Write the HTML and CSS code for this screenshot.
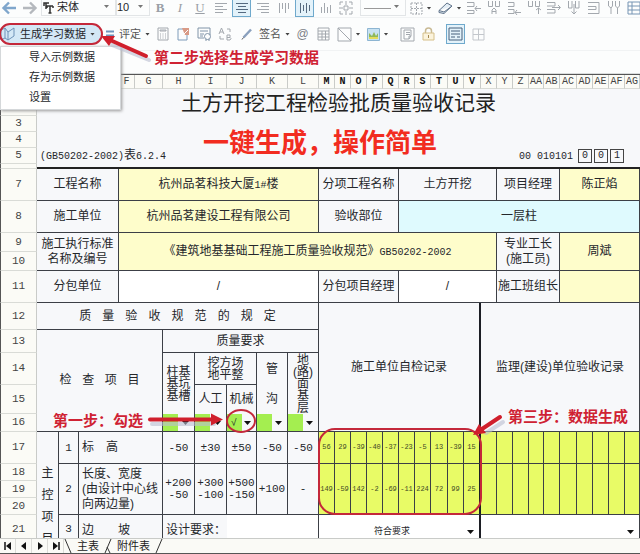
FILE: index.html
```html
<!DOCTYPE html>
<html lang="zh-CN">
<head>
<meta charset="utf-8">
<meta name="viewport" content="width=device-width, initial-scale=1">
<title>土方开挖工程检验批质量验收记录</title>
<link rel="stylesheet" href="styles.css">
</head>
<body>
<div class="workbook">
  <header class="toolbars">
    <div class="bar bar-format">
      <button class="tool back" aria-label="后退"><svg width="16" height="14" viewBox="0 0 16 14"><path d="M15 7H3M8 1.500L2.500 7L8 12.500" stroke="#7fa6cc" stroke-width="2.400"/></svg></button>
      <button class="tool forward" aria-label="前进"><svg width="16" height="14" viewBox="0 0 16 14"><path d="M1 7H13M8 1.500L13.500 7L8 12.500" stroke="#b4b8bd" stroke-width="2.400"/></svg></button>
      <label class="combo combo-font"><svg width="11" height="12" viewBox="0 0 11 12"><path d="M1 4V1H6M3 1V7M3 4H10M7 4V11M5.500 11H8.500M10 4V6M4 4V6" stroke="#333" stroke-width="1.500"/></svg>
        <select aria-label="字体"><option>宋体</option></select></label>
      <label class="combo combo-size"><select aria-label="字号"><option>10</option></select></label>
      <button class="tool letter bold">B</button>
      <button class="tool letter italic">I</button>
      <button class="tool letter underline">U</button>
      <button class="tool wide" aria-label="左对齐"><svg width="14" height="12" viewBox="0 0 14 12"><path d="M1 1.500H13M1 4.500H9M1 7.500H13M1 10.500H9"/></svg></button>
      <button class="tool wide on" aria-label="居中"><svg width="14" height="12" viewBox="0 0 14 12"><path d="M1 1.500H13M3 4.500H11M1 7.500H13M3 10.500H11" stroke="#556a80"/></svg></button>
      <button class="tool wide" aria-label="右对齐"><svg width="14" height="12" viewBox="0 0 14 12"><path d="M1 1.500H13M5 4.500H13M1 7.500H13M5 10.500H13"/></svg></button>
      <button class="tool wide" aria-label="顶端对齐"><svg width="12" height="12" viewBox="0 0 12 12"><path d="M1.500 1V11M4.500 1V7M7.500 1V11M10.500 1V7"/></svg></button>
      <button class="tool wide on" aria-label="垂直居中"><svg width="12" height="12" viewBox="0 0 12 12"><path d="M1.500 1V11M4.500 3V9M7.500 1V11M10.500 3V9" stroke="#556a80"/></svg></button>
      <button class="tool wide" aria-label="底端对齐"><svg width="12" height="12" viewBox="0 0 12 12"><path d="M1.500 5V11M4.500 1V11M7.500 5V11M10.500 3V11"/></svg></button>
      <button class="tool" aria-label="合并"><svg width="14" height="14" viewBox="0 0 14 14"><path d="M1 4V1H4M10 1H13V4M13 10V13H10M4 13H1V10M5 5H9V9H5ZM7 0V4M7 10V14M0 7H4M10 7H14"/></svg></button>
      <label class="combo combo-line"><select aria-label="线型"><option></option></select></label>
      <button class="tool split" aria-label="边框"><svg width="13" height="13" viewBox="0 0 13 13"><path d="M1 1H12V12H1ZM6.500 1V12M1 6.500H12" stroke-dasharray="2 1"/></svg><i class="caret"></i></button>
      <button class="tool split" aria-label="擦除"><svg width="15" height="13" viewBox="0 0 15 13"><path d="M1 8.500L9 1L14 4L6 11.500L1 10.500ZM1 8.500L6 10L14 4" stroke="#62758c" fill="#e3edf5"/></svg><i class="caret"></i></button>
      <button class="tool" aria-label="插入列"><svg width="14" height="14" viewBox="0 0 14 14"><path d="M0 1.500H7V5.500H0M0 9.500H7V12.500H0M14 7.500H8M10 5L8 7.500L10 10"/></svg></button>
      <button class="tool" aria-label="插入行"><svg width="14" height="14" viewBox="0 0 14 14"><path d="M1.500 0V5.500H5.500V0M8.500 0V5.500H12.500V0M5 13V9L7 7L9 9V13M5 10.500H9"/></svg></button>
      <button class="tool" aria-label="追加行"><svg width="14" height="14" viewBox="0 0 14 14"><path d="M1 1.500H7V5.500H1M1 8.500H7V12.500H1M14 11.500H8M10 9L8 11.500L10 14"/></svg></button>
      <button class="tool" aria-label="追加列"><svg width="14" height="14" viewBox="0 0 14 14"><path d="M1.500 0V5.500H5.500V0M8.500 0V5.500H12.500V0M11.500 13V7M9 9L11.500 7L14 9"/></svg></button>
      <button class="tool" aria-label="删除行"><svg width="14" height="14" viewBox="0 0 14 14"><path d="M0 1.500H8V5H0M0 8.500H8V12H0M5 6.500H13M11 4L13.500 6.500L11 9"/></svg></button>
      <button class="tool" aria-label="删除列"><svg width="14" height="14" viewBox="0 0 14 14"><path d="M1.500 0V7H5V0M8.500 0V7H12V0M7 3V13M4.500 10.500L7 13L9.500 10.500"/></svg></button>
      <button class="tool" aria-label="合并行"><svg width="14" height="14" viewBox="0 0 14 14"><path d="M1 1.500H12V12.500H1M1 5.500H9V8.500H1"/></svg></button>
      <button class="tool" aria-label="合并列"><svg width="14" height="14" viewBox="0 0 14 14"><path d="M1.500 0V5L4 7V13M5.500 0V5L4 7M8.500 0V5L10.500 7V13M12.500 0V5L10.500 7"/></svg></button>
      <button class="tool" aria-label="表格"><svg width="14" height="14" viewBox="0 0 14 14"><path d="M1 1H13V13H1ZM1 5H13M1 9H13M5 1V13" stroke="#7795b4"/></svg></button>
    </div>
    <div class="bar bar-data">
      <div class="menu-host">
        <button class="generate"><svg width="16" height="14" viewBox="0 0 16 14"><path d="M1 3L5 1V11L1 13ZM5 11L8 13L14 9V1L8 5V13M5 1L8 5" stroke="#6e93b8"/></svg>生成学习数据<i class="caret"></i></button>
        <ul class="menu">
          <li><button>导入示例数据</button></li>
          <li><button>存为示例数据</button></li>
          <li><button>设置</button></li>
        </ul>
      </div>
      <button class="tool text-tool rate"><svg width="9" height="10" viewBox="0 0 9 10"><path d="M0 2.500H8M0 6.500H8" stroke="#6f95bd" stroke-width="2"/></svg>评定<i class="caret"></i></button>
      <button class="tool wide" aria-label="计算"><svg width="12" height="14" viewBox="0 0 12 14"><path d="M1 1H11V13H1ZM3 3H9V4H3ZM3 7H4M5.500 7H6.500M8 7H9M3 9H4M5.500 9H6.500M8 9H9M3 11H4M5.500 11H6.500M8 11H9"/></svg></button>
      <button class="tool wide" aria-label="批注"><svg width="13" height="14" viewBox="0 0 13 14"><path d="M1 2H10V13H1Z" stroke="#7f9cba"/><path d="M5 1H12V8H8Z" fill="#d99a86" stroke="none"/><path d="M5 9L11 3" stroke="#fff"/></svg></button>
      <button class="tool wide" aria-label="证书"><svg width="15" height="14" viewBox="0 0 15 14"><path d="M1 1H13V8M7 11H1V1M3 4H11M3 7H7M3 9H6" stroke="#8094a8"/><circle cx="10.500" cy="9.500" r="3" stroke="#8094a8"/><path d="M9 12V14M12 12V14" stroke="#8094a8"/></svg></button>
      <button class="tool wide" aria-label="替换"><svg width="15" height="14" viewBox="0 0 15 14"><path d="M1 7L3.500 1L6 7M2 5H5M9 8V13H12L13 11.500L12 10.500H9M12 10.500V8H9M2 9V12H6M9 2H12V5"/></svg></button>
      <button class="tool wide" aria-label="编辑"><svg width="12" height="14" viewBox="0 0 12 14"><path d="M2.500 10.500L10 2.500" stroke="#8aa0bd" stroke-width="2.500"/><path d="M1 12.500L2.500 10.500" stroke="#555"/></svg></button>
      <button class="tool text-tool sign">签名<i class="caret"></i></button>
      <button class="tool wide at" aria-label="邮件">@</button>
      <button class="tool wide" aria-label="插入表格"><svg width="13" height="14" viewBox="0 0 13 14"><path d="M1 1H12V13H1ZM1 4H12M1 7H12M1 10H12M5 4V13M8.500 4V13"/></svg></button>
      <button class="tool split" aria-label="斜线"><svg width="15" height="15" viewBox="0 0 15 15"><path d="M1 1H14V14H1ZM1 1L14 14"/></svg><i class="caret"></i></button>
      <button class="tool split picture" aria-label="图片"><svg width="13" height="13" viewBox="0 0 13 13"><path d="M.5.500H12.500V12.500H.5Z" fill="#c8e2f2" stroke="#8db5d2"/><path d="M2 11V5L5 8L7 4L9 8L11 5V11Z" fill="#8fb85a" stroke="none"/><path d="M2 9H11V11H2Z" fill="#e4dc5a" stroke="none"/></svg><i class="caret"></i></button>
      <button class="tool wide doc" aria-label="文档"><svg width="15" height="15" viewBox="0 0 15 15"><path d="M1 1H14V14H1ZM4 3H11V9L9 12H4ZM6 5.500H10M6 7.500H10M9 12V9H11"/></svg></button>
      <button class="tool" aria-label="锁定"><svg width="13" height="14" viewBox="0 0 13 14"><path d="M3.500 6V4C3.500 0 9.500 0 9.500 4V6" stroke="#c9ba94" stroke-width="1.500"/><path d="M1 6H12V13H1Z" fill="#fbf3dc" stroke="#d5c08a"/><path d="M6.500 8V11" stroke="#a58a50"/></svg></button>
      <button class="tool on panel" aria-label="面板"><svg width="15" height="14" viewBox="0 0 15 14"><path d="M1 1H14V13H1ZM3 4H12M3 7H12M3 10H7M9 10H12" stroke="#47607c"/></svg></button>
      <button class="tool" aria-label="网格"><svg width="13" height="13" viewBox="0 0 13 13"><path d="M1 1H12V12H1ZM6.500 1V12M1 6.500H12" stroke="#c3c7cc"/></svg></button>
    </div>
  </header>

  <main class="sheet">
    <table>
      <colgroup>
        <col class="w37"><col class="w22"><col class="w20"><col class="w40"><col class="w16"><col class="w28">
        <col class="w32"><col class="w32"><col class="w30"><col class="w31"><col class="w31">
        <col class="w16"><col class="w16"><col class="w16"><col class="w16"><col class="w16"><col class="w16"><col class="w16"><col class="w17"><col class="w16"><col class="w17">
        <col class="w16"><col class="w16"><col class="w16"><col class="w15"><col class="w16"><col class="w17"><col class="w16"><col class="w16"><col class="w16"><col class="w15">
      </colgroup>
      <thead>
        <tr class="letters"><th></th><th></th><th></th><th></th><th>F</th><th>G</th><th>H</th><th>I</th><th>J</th><th>K</th><th>L</th><th class="sel">M</th><th class="sel">N</th><th class="sel">O</th><th class="sel">P</th><th class="sel">Q</th><th class="sel">R</th><th class="sel">S</th><th class="sel">T</th><th class="sel">U</th><th class="sel">V</th><th>X</th><th>Y</th><th>Z</th><th>AA</th><th>AB</th><th>AC</th><th>AD</th><th>AE</th><th>AF</th><th>AG</th></tr>
      </thead>
      <tbody>
        <tr class="h27"><th></th><td class="open title" colspan="30">土方开挖工程检验批质量验收记录</td></tr>
        <tr class="h16"><th>3</th><td class="open" colspan="30"></td></tr>
        <tr class="h16"><th>4</th><td class="open" colspan="30"></td></tr>
        <tr class="h16"><th>5</th><td class="open left num" colspan="10">(GB50202-2002)<span class="cjk">表</span>6.2.4</td><td class="open right num" colspan="16">00 010101</td><td class="open"><span class="digit">0</span></td><td class="open"><span class="digit">0</span></td><td class="open"><span class="digit">1</span></td><td class="open"></td></tr>
        <tr class="h4"><th></th><td class="open edge" colspan="30"></td></tr>
        <tr class="h32"><th>7</th><td colspan="3">工程名称</td><td class="cream" colspan="7">杭州品茗科技大厦<span class="num">1#</span>楼</td><td colspan="5">分项工程名称</td><td colspan="6">土方开挖</td><td colspan="4">项目经理</td><td class="cream" colspan="5">陈正焰</td></tr>
        <tr class="h32"><th>8</th><td colspan="3">施工单位</td><td class="cream" colspan="7">杭州品茗建设工程有限公司</td><td colspan="5">验收部位</td><td class="aqua" colspan="15">一层柱</td></tr>
        <tr class="h19"><th>9</th><td colspan="3" rowspan="2">施工执行标准<br>名称及编号</td><td class="cream" colspan="18" rowspan="2">《建筑地基基础工程施工质量验收规范》<span class="num">GB50202-2002</span></td><td colspan="4" rowspan="2">专业工长<br>(施工员)</td><td class="cream" colspan="5" rowspan="2">周斌</td></tr>
        <tr class="h19"><th>10</th></tr>
        <tr class="h32"><th>11</th><td colspan="3">分包单位</td><td class="white" colspan="7">/</td><td colspan="5">分包项目经理</td><td class="white" colspan="6">/</td><td colspan="4">施工班组长</td><td class="cream" colspan="5"></td></tr>
        <tr class="h27"><th>12</th><td colspan="10"><span class="spread nine"><b>质</b><b>量</b><b>验</b><b>收</b><b>规</b><b>范</b><b>的</b><b>规</b><b>定</b></span></td><td class="heavy" colspan="10" rowspan="5">施工单位自检记录</td><td colspan="10" rowspan="5">监理(建设)单位验收记录</td></tr>
        <tr class="h23"><th>13</th><td colspan="5" rowspan="4"><span class="spread four"><b>检</b><b>查</b><b>项</b><b>目</b></span></td><td colspan="5">质量要求</td></tr>
        <tr class="h32"><th>14</th><td class="tight join" rowspan="2">柱基<br>基坑<br>基槽</td><td class="tight" colspan="2">挖方场<br>地平整</td><td class="loose join" rowspan="2">管<br>沟</td><td class="tight join" rowspan="2">地<br>(路)<br>面<br>基<br>层</td></tr>
        <tr class="h29"><th>15</th><td class="join">人工</td><td class="join">机械</td></tr>
        <tr class="h18"><th>16</th>
          <td><label class="pick"><select aria-label="柱基基坑基槽"><option></option></select></label></td>
          <td><label class="pick"><select aria-label="人工"><option></option></select></label></td>
          <td><label class="pick"><select aria-label="机械"><option>√</option></select></label></td>
          <td><label class="pick"><select aria-label="管沟"><option></option></select></label></td>
          <td><label class="pick"><select aria-label="地(路)面基层"><option></option></select></label></td></tr>
        <tr class="h32"><th>17</th><td class="group" rowspan="5">主<br>控<br>项<br>目</td><td class="val">1</td><td class="left" colspan="3">标　高</td><td class="val">-50</td><td class="val">±30</td><td class="val">±50</td><td class="val">-50</td><td class="val">-50</td><td class="lime">56</td><td class="lime">29</td><td class="lime">-39</td><td class="lime">-40</td><td class="lime">-37</td><td class="lime">-23</td><td class="lime">-5</td><td class="lime">13</td><td class="lime">-39</td><td class="lime heavy">15</td><td class="lime"></td><td class="lime"></td><td class="lime"></td><td class="lime"></td><td class="lime"></td><td class="lime"></td><td class="lime"></td><td class="lime"></td><td class="lime"></td><td class="lime"></td></tr>
        <tr class="h17"><th>18</th><td class="val" rowspan="3">2</td><td class="left" colspan="3" rowspan="3">长度、宽度<br>(由设计中心线<br>向两边量)</td><td class="val" rowspan="3">+200<br>-50</td><td class="val" rowspan="3">+300<br>-100</td><td class="val" rowspan="3">+500<br>-150</td><td class="val" rowspan="3">+100</td><td class="val" rowspan="3">-</td><td class="lime" rowspan="3">149</td><td class="lime" rowspan="3">-59</td><td class="lime" rowspan="3">142</td><td class="lime" rowspan="3">-2</td><td class="lime" rowspan="3">-69</td><td class="lime" rowspan="3">-11</td><td class="lime" rowspan="3">224</td><td class="lime" rowspan="3">72</td><td class="lime" rowspan="3">99</td><td class="lime heavy" rowspan="3">25</td><td class="lime" rowspan="3"></td><td class="lime" rowspan="3"></td><td class="lime" rowspan="3"></td><td class="lime" rowspan="3"></td><td class="lime" rowspan="3"></td><td class="lime" rowspan="3"></td><td class="lime" rowspan="3"></td><td class="lime" rowspan="3"></td><td class="lime" rowspan="3"></td><td class="lime" rowspan="3"></td></tr>
        <tr class="h17"><th>19</th></tr>
        <tr class="h17"><th>20</th></tr>
        <tr class="h66"><th>21</th><td class="val">3</td><td class="left" colspan="3">边　　坡</td><td class="left bare" colspan="2">设计要求：</td><td class="white" colspan="3"></td><td class="white heavy" colspan="10"><label class="result"><select aria-label="自检结果"><option>符合要求</option></select></label></td><td class="white" colspan="10"><label class="result"><select aria-label="验收结果"><option></option></select></label></td></tr>
      </tbody>
    </table>
  </main>

  <footer class="tabs">
    <button class="nav" aria-label="第一张"><svg width="8" height="8" viewBox="0 0 8 8"><path d="M1 0V8" stroke="#111" stroke-width="1.500"/><path d="M7 0V8L2 4Z" fill="#111"/></svg></button>
    <button class="nav" aria-label="上一张"><svg width="8" height="8" viewBox="0 0 8 8"><path d="M6 0V8L1 4Z" fill="#111"/></svg></button>
    <button class="nav" aria-label="下一张"><svg width="8" height="8" viewBox="0 0 8 8"><path d="M2 0V8L7 4Z" fill="#111"/></svg></button>
    <button class="nav" aria-label="最后一张"><svg width="8" height="8" viewBox="0 0 8 8"><path d="M7 0V8" stroke="#111" stroke-width="1.500"/><path d="M1 0V8L6 4Z" fill="#111"/></svg></button>
    <svg class="slant" width="8" height="14" viewBox="0 0 8 14"><path d="M1 0L7 14" stroke="#333"/></svg>
    <a href="#main">主表</a>
    <svg class="slant" width="8" height="14" viewBox="0 0 8 14"><path d="M7 0L1 14M3 8L6 14" stroke="#333"/></svg>
    <a href="#attach">附件表</a>
    <svg class="slant" width="8" height="14" viewBox="0 0 8 14"><path d="M7 0L1 14" stroke="#333"/></svg>
  </footer>

  <div class="notes">
    <svg width="640" height="554" viewBox="0 0 640 554">
      <g class="shade"><path d="M149 60L112 45"/><path d="M152 424H214"/><path d="M503 422L486 433"/></g>
      <g class="ring">
        <rect x="0" y="24" width="102" height="20" rx="10"/>
        <ellipse cx="241" cy="421" rx="14" ry="11"/>
        <rect x="319" y="429" width="162" height="85" rx="16"/>
      </g>
      <g class="shaft"><path d="M146 56L110 40"/><path d="M150 419.500H214"/><path d="M500 417L482 429"/></g>
      <g class="head"><path d="M101 36L115 36L109 46Z"/><path d="M223 419.500L211 413.500V425.500Z"/><path d="M473 435L479 424L486 433Z"/></g>
    </svg>
    <p class="note step-two">第二步选择生成学习数据</p>
    <p class="note headline">一键生成，操作简单</p>
    <p class="note step-one">第一步：勾选</p>
    <p class="note step-three">第三步：数据生成</p>
  </div>
</div>
</body>
</html>
```
FILE: styles.css
```css
* { box-sizing: border-box; }

body {
  margin: 0;
  background: #fcfdfd;
  color: #25272b;
  font: 12px/15px "Liberation Sans", "Noto Sans CJK SC", sans-serif;
}

button, select {
  margin: 0;
  padding: 0;
  border: 0;
  background: none;
  color: inherit;
  font: inherit;
  appearance: none;
}

.workbook {
  position: relative;
  display: flex;
  flex-direction: column;
  height: 100vh;
  overflow: hidden;
  border-bottom: 1px solid #555;
}

/* Toolbars */
.toolbars {
  flex: none;
  height: 74px;
  font-size: 11px;
  border-bottom: 1px solid #dadddd;
}

.bar {
  display: flex;
  align-items: center;
  overflow: visible;
}

.bar-format { height: 16px; }

.bar-data {
  height: 34px;
  border-top: 1px solid #f1f3f4;
  border-bottom: 1px solid #f1f3f4;
  margin-top: 1px;
}

.tool {
  flex: none;
  display: flex;
  align-items: center;
  justify-content: center;
  gap: 4px;
  width: 20px;
  height: 18px;
}

.tool svg, .generate svg {
  flex: none;
  fill: none;
  stroke: #a3a8ae;
}

.wide { width: 21px; }
.split { width: 29px; }
.back { width: 18px; }
.forward { width: 23px; }

.on {
  width: 19px;
  margin: 0 1px;
  border: 1px solid #6fa9cc;
  background: #e3f2fa;
}

.panel { height: 20px; margin-left: 8px; margin-right: 3px; }
.doc { margin-left: 5px; }

.letter {
  color: #9a9fa6;
  font: 13px "Liberation Serif", serif;
}
.bold { font-weight: bold; }
.italic { font-style: italic; }
.underline { text-decoration: underline; }
.at { color: #7c8187; font-size: 12px; }

.caret {
  flex: none;
  width: 5px;
  height: 3px;
  background: #444;
  clip-path: polygon(0 0, 100% 0, 50% 100%);
}

.combo {
  position: relative;
  flex: none;
  display: flex;
  align-items: center;
  gap: 3px;
  height: 16px;
  border: 1px solid #e2e5e7;
  border-top: 0;
}
.combo::after {
  content: "";
  position: absolute;
  right: 6px;
  top: 5px;
  width: 5px;
  height: 3px;
  background: #777;
  clip-path: polygon(0 0, 100% 0, 50% 100%);
}
.combo svg { fill: none; }
.combo select { flex: 1; min-width: 0; height: 15px; }
.combo-font { width: 75px; padding-left: 1px; }
.combo-size { width: 34px; }
.combo-line {
  width: 46px;
  margin-left: 4px;
  background: linear-gradient(#999, #999) 3px 8px / 27px 1px no-repeat;
}

.menu-host { position: relative; flex: none; width: 104px; }

.generate {
  display: flex;
  align-items: center;
  gap: 4px;
  width: 101px;
  height: 19px;
  border-radius: 9px;
  background: #d3e8f6;
  white-space: nowrap;
}

.menu {
  position: absolute;
  z-index: 2;
  left: 0;
  top: 21px;
  width: 121px;
  margin: 0;
  padding: 1px 0;
  list-style: none;
  background: #fff;
  border: 1px solid #d5d8da;
  box-shadow: 1px 1px 3px #999;
}
.menu button {
  width: 100%;
  height: 20px;
  padding-left: 28px;
  text-align: left;
}

.text-tool { color: #555; }
.rate { width: 48px; }
.sign { width: 35px; }

/* Worksheet */
.sheet {
  flex: 1;
  min-height: 0;
  overflow: hidden;
  border-top: 1px solid #555;
  background: #f7f8fa;
}

table {
  width: 100%;
  table-layout: fixed;
  border-collapse: separate;
  border-spacing: 0;
}

.w15 { width: 15px; }
.w16 { width: 16px; }
.w17 { width: 17px; }
.w20 { width: 20px; }
.w22 { width: 22px; }
.w28 { width: 28px; }
.w30 { width: 30px; }
.w31 { width: 31px; }
.w32 { width: 32px; }
.w37 { width: 37px; }
.w40 { width: 40px; }

.letters { height: 14px; }
.h4 { height: 4px; }
.h16 { height: 16px; }
.h17 { height: 17px; }
.h18 { height: 18px; }
.h19 { height: 19px; }
.h23 { height: 23px; }
.h27 { height: 27px; }
.h29 { height: 29px; }
.h32 { height: 32px; }
.h66 { height: 66px; }

th, td {
  padding: 0;
  overflow: hidden;
  text-align: center;
  vertical-align: middle;
  white-space: nowrap;
}

th {
  border-right: 1px solid #c9cbc8;
  border-bottom: 1px solid #d9dbd6;
  background: #fbfbf6;
  color: #444;
  font: 10px/13px "Liberation Mono", monospace;
}
tbody th { border-left: 1px solid #555; font-size: 11px; }
th.sel { color: #111; font-weight: bold; }

td {
  border-right: 1px solid #3c3f46;
  border-bottom: 1px solid #3c3f46;
}

td.open { border: 0; }
td.edge { height: 5px; border-bottom: 2px solid #222; }
td.join { border-bottom: 0; }
td.bare { border-right: 0; }
td.heavy { border-right: 2px solid #1c1e24; }

.title { font-size: 21px; line-height: 26px; color: #222; }
.left { padding-left: 3px; text-align: left; }
.right { padding-right: 4px; text-align: right; }
.num { font: 10px/15px "Liberation Mono", monospace; }
.cjk { font: 12px/12px "Noto Sans CJK SC", sans-serif; }
.val { font: 11px/12px "Liberation Mono", monospace; }
.white { background: #fff; }
.cream { background: #fefdcb; }
.aqua { background: #dffafe; }
.tight { line-height: 12px; }
.loose { line-height: 30px; }
.group { vertical-align: top; padding-top: 30px; line-height: 22px; }

.lime {
  background: #e8fb66;
  color: #3f4a26;
  font: 7px/9px "Liberation Mono", monospace;
}

.digit {
  display: block;
  width: 14px;
  height: 14px;
  margin: 0 auto;
  border: 1px solid #444;
  font: 10px/12px "Liberation Mono", monospace;
}

.spread { display: flex; justify-content: space-between; margin: 0 auto; }
.spread b { font-weight: normal; }
.nine { width: 70%; }
.four { width: 64%; }

.pick, .result {
  position: relative;
  display: block;
  height: 17px;
}
.pick { background: linear-gradient(#a4ee50, #a4ee50) 0 0 / 15px 100% no-repeat; }
.pick select { width: 100%; height: 17px; padding-left: 4px; font-size: 10px; }
.result select { width: 100%; height: 17px; padding-right: 14px; text-align: center; font-size: 9px; }
.pick::after, .result::after {
  content: "";
  position: absolute;
  right: 5px;
  top: 7px;
  width: 7px;
  height: 4px;
  background: #111;
  clip-path: polygon(0 0, 100% 0, 50% 100%);
}
.h66 td, .h66 th { vertical-align: top; padding-top: 8px; }

/* Sheet tabs */
.tabs {
  flex: none;
  display: flex;
  align-items: center;
  height: 15px;
  border-top: 1px solid #c9cbc8;
  background: #fafaf6;
  font-size: 11px;
}
.tabs a { padding: 0 5px; color: #222; text-decoration: none; }
.nav {
  display: flex;
  align-items: center;
  justify-content: center;
  width: 16px;
  height: 14px;
  border-right: 1px solid #dcdcd8;
}
.slant { flex: none; fill: none; }

/* Tutorial annotations over the sheet */
.notes { position: absolute; z-index: 3; inset: 0; pointer-events: none; }
.notes svg { display: block; fill: none; }
.ring { stroke: #c4283a; stroke-width: 2; }
.shaft { stroke: #d01f2c; stroke-width: 4; stroke-linecap: round; }
.head { fill: #d01f2c; }
.shade { stroke: #b9bed0; stroke-width: 4; stroke-linecap: round; opacity: 0.6; }

.note {
  position: absolute;
  margin: 0;
  color: #cf2233;
  font: bold 15px/18px "Noto Sans CJK SC", sans-serif;
  white-space: nowrap;
}
.step-two { left: 154px; top: 48px; }
.step-one { left: 53px; top: 411px; }
.step-three { left: 508px; top: 407px; }
.headline { left: 203px; top: 125px; color: #f22c20; font-size: 26px; line-height: 32px; }
```
